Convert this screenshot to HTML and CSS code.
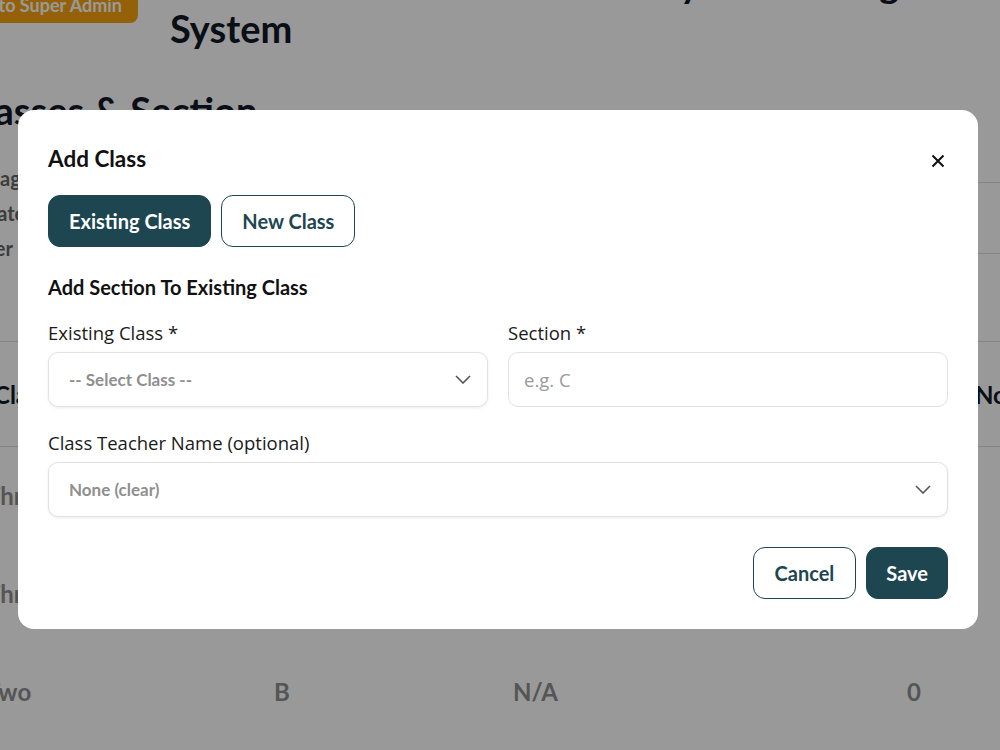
FILE: index.html
```html
<!DOCTYPE html>
<html lang="en">
<head>
    <meta charset="UTF-8">
    <meta name="viewport" content="width=device-width, initial-scale=1.0">
    <title>Classes &amp; Section</title>
    <link rel="stylesheet" href="styles.css">
</head>
<body>
    <div class="page">
        <div class="page-header">
            <a class="back-badge" href="#">Back to Super Admin</a>
            <h1>Holistic Education Fee Monthly Accounting System</h1>
        </div>

        <h2 class="page-title">Classes &amp; Section</h2>

        <div class="summary">
            <div class="summary-text">
                <p>Manage classes</p>
                <p>Update sections</p>
                <p>Other settings</p>
            </div>
            <div class="summary-card"></div>
        </div>

        <table class="class-table">
            <thead>
                <tr>
                    <th>Class</th>
                    <th>Section</th>
                    <th>Class Teacher</th>
                    <th>Students</th>
                    <th>No. of Subjects</th>
                </tr>
            </thead>
            <tbody>
                <tr><td>Three</td><td>A</td><td>N/A</td><td>0</td><td></td></tr>
                <tr><td>Three</td><td>B</td><td>N/A</td><td>0</td><td></td></tr>
                <tr><td>Two</td><td>B</td><td>N/A</td><td>0</td><td></td></tr>
            </tbody>
        </table>
    </div>

    <div class="modal-backdrop">
        <div class="modal">
            <div class="modal-header">
                <h3>Add Class</h3>
                <button class="close-btn" aria-label="Close">
                    <svg width="14" height="14" viewBox="0 0 14 14">
                        <path d="M1.5 1.5 L12.5 12.5 M12.5 1.5 L1.5 12.5" stroke="#111" stroke-width="2" fill="none"/>
                    </svg>
                </button>
            </div>

            <div class="tabs">
                <button class="tab active">Existing Class</button>
                <button class="tab">New Class</button>
            </div>

            <h4 class="form-title">Add Section To Existing Class</h4>

            <div class="form-grid">
                <div class="field">
                    <label>Existing Class *</label>
                    <div class="select-box">
                        <span>-- Select Class --</span>
                        <svg width="16" height="9" viewBox="0 0 16 9">
                            <polyline points="1,1 8,8 15,1" stroke="#555" stroke-width="1.6" fill="none"/>
                        </svg>
                    </div>
                </div>
                <div class="field">
                    <label>Section *</label>
                    <input class="text-input" type="text" placeholder="e.g. C">
                </div>
                <div class="field wide">
                    <label>Class Teacher Name (optional)</label>
                    <div class="select-box">
                        <span>None (clear)</span>
                        <svg width="16" height="9" viewBox="0 0 16 9">
                            <polyline points="1,1 8,8 15,1" stroke="#555" stroke-width="1.6" fill="none"/>
                        </svg>
                    </div>
                </div>
            </div>

            <div class="modal-footer">
                <button class="btn btn-outline">Cancel</button>
                <button class="btn btn-primary">Save</button>
            </div>
        </div>
    </div>
</body>
</html>
```

FILE: styles.css
```css
* {
    margin: 0;
    padding: 0;
    box-sizing: border-box;
}

body {
    font-family: 'Lato', 'Liberation Sans', sans-serif;
    background: #fff;
    color: #1a1f2e;
    overflow: hidden;
    height: 750px;
}

.page {
    margin-left: -40px;
    width: 1100px;
}

/* header */
.page-header {
    display: flex;
    align-items: flex-start;
    margin-top: -39px;
    margin-left: -21px;
}

.back-badge {
    margin-top: 26px;
    height: 36px;
    display: flex;
    align-items: center;
    padding: 0 16px;
    background: #f7a20f;
    color: #fff;
    font-weight: bold;
    font-size: 18px;
    border-radius: 8px;
    text-decoration: none;
    white-space: nowrap;
}

.page-header h1 {
    margin-left: 32px;
    width: 800px;
    font-size: 38px;
    line-height: 45px;
    color: #111827;
}

.page-title {
    margin-top: 39px;
    font-size: 38px;
    line-height: 41px;
    color: #111827;
}

.summary {
    display: flex;
    justify-content: space-between;
    margin-top: 30px;
}

.summary-text p {
    font-size: 20px;
    font-weight: bold;
    color: #666;
    line-height: 35px;
}

.summary-card {
    width: 100px;
    height: 72px;
    margin-top: 21px;
    margin-right: 60px;
    border-top: 1px solid #ddd;
    border-bottom: 1px solid #ddd;
}

.class-table {
    margin-top: 75px;
    margin-left: 26px;
    border-collapse: collapse;
    width: 1100px;
    table-layout: fixed;
}

.class-table th {
    text-align: left;
    padding-left: 8px;
    font-size: 24px;
    color: #111827;
    height: 105px;
    white-space: nowrap;
    overflow: hidden;
    border-top: 1px solid #ddd;
    border-bottom: 1px solid #ddd;
}

.class-table td {
    height: 98px;
    font-size: 24px;
    font-weight: bold;
    color: #8e8e8e;
}

.class-table th:nth-child(1) { width: 288px; }
.class-table th:nth-child(2) { width: 239px; }
.class-table th:nth-child(3) { width: 394px; }
.class-table th:nth-child(4) { width: 60px; }

/* modal */
.modal-backdrop {
    position: fixed;
    inset: 0;
    background: rgba(0, 0, 0, 0.4);
    display: flex;
    justify-content: flex-start;
    align-items: flex-start;
    padding: 110px 0 0 18px;
}

.modal {
    width: 960px;
    background: #fff;
    border-radius: 16px;
    padding: 30px;
}

.modal-header {
    display: flex;
    justify-content: space-between;
    align-items: center;
    height: 36px;
}

.modal-header h3 {
    font-size: 22.5px;
    font-weight: bold;
    color: #111;
}

.close-btn {
    border: none;
    background: none;
    width: 20px;
    height: 20px;
    margin-top: 6px;
    display: flex;
    align-items: center;
    justify-content: center;
    cursor: pointer;
}

.tabs {
    display: flex;
    gap: 10px;
    margin-top: 19px;
}

.tab {
    height: 52px;
    padding: 0 20px;
    font-family: 'Lato', sans-serif;
    font-size: 20px;
    font-weight: bold;
    color: #1e4651;
    background: #fff;
    border: 1px solid #1e4651;
    border-radius: 12px;
    cursor: pointer;
}

.tab.active {
    background: #1e4651;
    color: #fff;
}

.form-title {
    margin-top: 28px;
    font-size: 20px;
    line-height: 24px;
    color: #111;
}

.form-grid {
    display: grid;
    grid-template-columns: 1fr 1fr;
    column-gap: 20px;
    row-gap: 24px;
    margin-top: 22px;
}

.field {
    display: flex;
    flex-direction: column;
    gap: 7px;
}

.field.wide {
    grid-column: span 2;
}

.field label {
    font-family: 'Open Sans', 'Noto Sans', sans-serif;
    font-size: 18.5px;
    line-height: 24px;
    color: #1a1a1a;
}

.select-box,
.text-input {
    height: 55px;
    border: 1px solid #e2e2e2;
    border-radius: 10px;
    background: #fff;
    box-shadow: 0 1px 3px rgba(0, 0, 0, 0.08);
}

.select-box {
    display: flex;
    align-items: center;
    justify-content: space-between;
    padding: 0 16px 0 20px;
    font-size: 17px;
    font-weight: bold;
    color: #8f8f8f;
}

.text-input {
    box-shadow: none;
    padding: 0 15px;
    font-family: 'Open Sans', 'Noto Sans', sans-serif;
    font-size: 18.5px;
    outline: none;
}

.text-input::placeholder {
    color: #9a9a9a;
}

.modal-footer {
    display: flex;
    justify-content: flex-end;
    gap: 10px;
    margin-top: 30px;
}

.btn {
    height: 52px;
    padding: 0 21px;
    font-family: 'Lato', sans-serif;
    font-size: 20px;
    font-weight: bold;
    border-radius: 12px;
    cursor: pointer;
}

.btn-outline {
    background: #fff;
    color: #1e4651;
    border: 1px solid #1e4651;
}

.btn-primary {
    padding: 0 19px;
    background: #1e4651;
    color: #fff;
    border: 1px solid #1e4651;
}
```
